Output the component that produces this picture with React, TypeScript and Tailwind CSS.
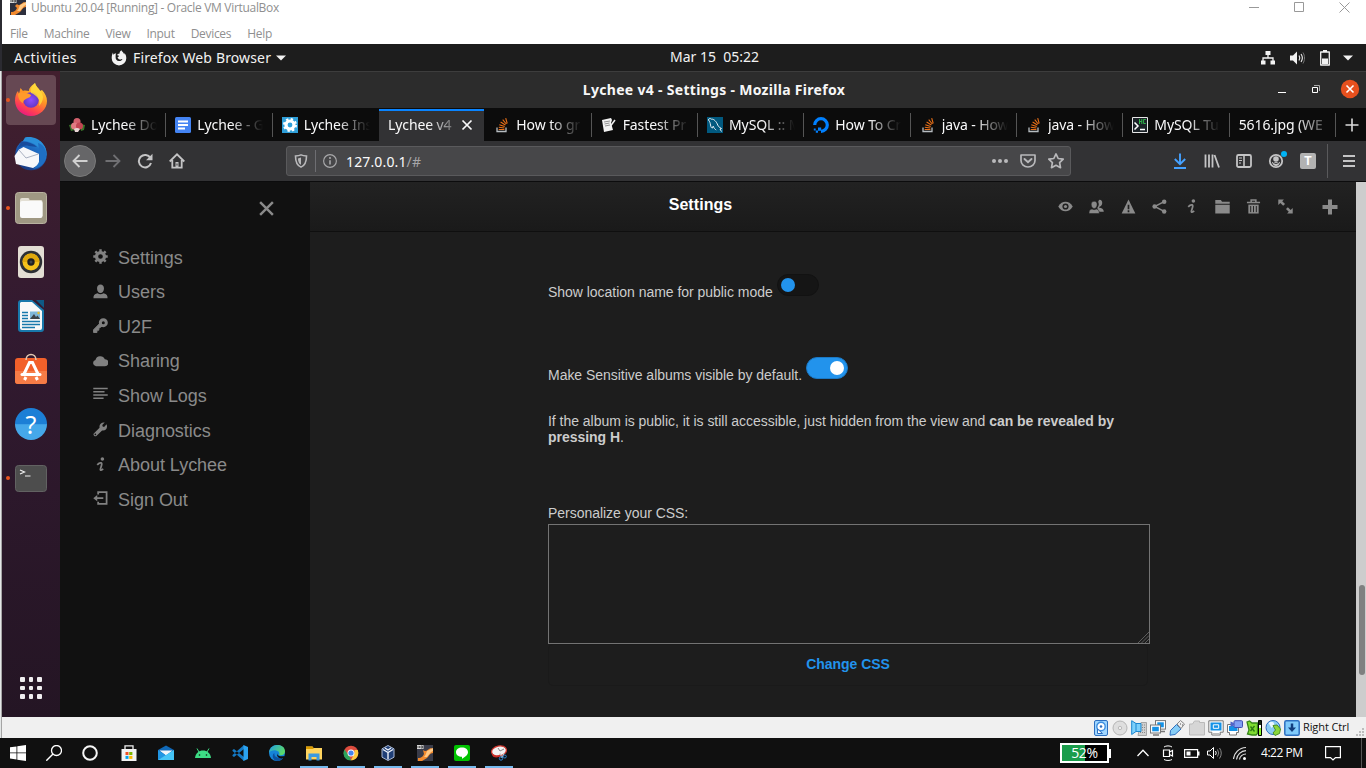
import type { ReactNode } from 'react';

type IconProps = { children: ReactNode; w?: number; h?: number; vb?: string; className?: string };

const Svg = ({ children, w = 16, h, vb, className = '' }: IconProps) => (
  <svg width={w} height={h ?? w} viewBox={vb ?? '0 0 16 16'} fill="none" className={`shrink-0 ${className}`}>
    {children}
  </svg>
);

/* ---------- VirtualBox window ---------- */

const VmLogo = () => (
  <Svg>
    <rect width="16" height="16" fill="#2d2f3d" />
    <path d="M7 5c2 3 5-1 7-2l2 1v4c-3 0-4 3-6 5l-5 3H1v-3c4 0 5-2 6-4L5 7z" fill="#f28a2e" />
    <path d="M10 6l6-3v3c-3 1-4 4-6 6H7c2-2 2-4 3-6z" fill="#ffc985" />
    <rect width="6.500" height="4" fill="#d8d8d8" />
    <path d="M1 1v2M2.500 1v2M4 1h1.500v2H4z" stroke="#444" strokeWidth=".8" />
  </Svg>
);

const VmTitle = () => (
  <header className="flex h-[44px] flex-col bg-white font-['Open_Sans','Noto_Sans',sans-serif] text-[12px] text-[#8f8f8f]">
    <div className="flex h-[24px] items-start justify-between pl-[8px]">
      <div className="-mt-[1px] flex items-start gap-[5px]">
        <VmLogo />
        <span className="leading-[17px] tracking-[-0.31px]">Ubuntu 20.04 [Running] - Oracle VM VirtualBox</span>
      </div>
      <div className="flex gap-[35px] pr-[16px] pt-[2px]">
        <Svg w={10} vb="0 0 10 10"><path d="M0 5.500h10" stroke="#999" /></Svg>
        <Svg w={10} vb="0 0 10 10"><path d="M.5.5h9v9h-9z" stroke="#999" /></Svg>
        <Svg w={11} vb="0 0 11 11"><path d="M.5.500l10 10M10.500.500l-10 10" stroke="#999" /></Svg>
      </div>
    </div>
    <nav className="flex h-[20px] items-center gap-[16px] pl-[8px]">
      {['File', 'Machine', 'View', 'Input', 'Devices', 'Help'].map((m) => (
        <span key={m} className="tracking-[-0.3px]">{m}</span>
      ))}
    </nav>
  </header>
);

/* ---------- GNOME top bar ---------- */

const TopBar = () => (
  <div className="grid h-[27px] grid-cols-[1fr_auto_1fr] items-center bg-[#1d1d1d] font-['Noto_Sans',sans-serif] text-[14px] text-[#f2f2f2]">
    <div className="flex items-center pl-[12px]">
      <span className="w-[97px] tracking-[0.46px]">Activities</span>
      <Svg className="mr-[6px]">
        <path d="M8 15.500a7.300 7.300 0 0 0 7.300-7.300c0-2.300-.8-4-2-5.100.1.700 0 1.100-.1 1.400C12.500 2.500 11 1.500 10.400.300 9 1.200 8.500 2.300 8.600 3.500c-1.400.1-2.200.7-2.400 1.500.3.500 1 .6 1.900.7-.2.800-1 1.100-1.500 1.400.2 2 1.500 2.700 2.800 2.400 1-.2 1.300-.7 2-.5-.5 1.500-1.900 2.200-3.400 2.100-2.200-.2-3.600-2-3.400-4.100.1-1-.1-2.700.6-3.700-1.300.2-2.300.8-2.900 1.400L2 2.500C1.200 4 .7 6 .7 8.200A7.300 7.300 0 0 0 8 15.500z" fill="#f2f2f2" />
      </Svg>
      <span className="tracking-[0.14px]">Firefox Web Browser</span>
      <Svg w={10} h={6} vb="0 0 10 6" className="ml-[5px]"><path d="M0 .5h10L5 5.500z" fill="#f2f2f2" /></Svg>
    </div>
    <span className="-mt-[2px] whitespace-pre pl-[61px]">Mar 15  05:22</span>
    <div className="flex items-center justify-end pr-[13px] text-white">
      <Svg><path d="M5.500 1h5v4h-5zM1 10.500h4.500v4H1zM10.500 10.500H15v4h-4.500z" fill="#f2f2f2" /><path d="M8 5v3M3 11V8h10v3" stroke="#f2f2f2" strokeWidth="1.300" /></Svg>
      <Svg className="ml-[13px]">
        <path d="M1 5.500h3l4-4v13l-4-4H1z" fill="#f2f2f2" />
        <path d="M10 5.500c1 1.500 1 3.500 0 5M12 4c1.700 2.500 1.700 5.500 0 8" stroke="#f2f2f2" strokeWidth="1.100" />
        <path d="M14 2.500c2 3.500 2 7.500 0 11" stroke="#777" />
      </Svg>
      <Svg className="ml-[12px]"><path d="M3.700 2h8.600v13H3.700z" stroke="#f2f2f2" strokeWidth="1.300" strokeLinejoin="round" /><path d="M6 0h4v2H6zM5 8.500h6V14H5z" fill="#f2f2f2" /></Svg>
      <Svg w={10} h={6} vb="0 0 10 6" className="ml-[10px]"><path d="M0 .5h10L5 5.500z" fill="#f2f2f2" /></Svg>
    </div>
  </div>
);

/* ---------- Dock ---------- */

const FirefoxLogo = () => (
  <Svg w={34} vb="0 0 34 34">
    <defs>
      <linearGradient id="ff" x1=".75" y1="0" x2=".25" y2="1"><stop stopColor="#ffe93f" /><stop offset=".4" stopColor="#ff9823" /><stop offset=".75" stopColor="#ff4052" /><stop offset="1" stopColor="#e31587" /></linearGradient>
      <radialGradient id="ffp"><stop stopColor="#8f4dff" /><stop offset="1" stopColor="#6438c5" /></radialGradient>
    </defs>
    <path d="M17 33C8 33 1 26 1 17.500 1 14 2 10 4 8l1 3 1.500-6L9 8c2-1 4 0 6 0 0-4 4-6 6-8 1 4 4 5 5 8l2-1c3 3 5 7 5 11 0 8-7 15-16 15z" fill="url(#ff)" />
    <circle cx="17" cy="17" r="7.800" fill="url(#ffp)" />
    <path d="M4 11c2-2 4-2 6-1 2 0 4 0 7 2 0 2-3 3-5 4-2 1-3 2-3 4-3-1-5-5-5-9z" fill="#ff9a2b" />
    <path d="M21 0c1 5 7 7 8 14 0 4-2 7-4 9 2-7-3-11-8-13-1-4 1-7 4-10z" fill="#ffd93b" opacity=".85" />
  </Svg>
);

const ThunderbirdLogo = () => (
  <Svg w={34} vb="0 0 34 34">
    <defs><linearGradient id="tb" x1="1" y1="0" x2=".4" y2="1"><stop stopColor="#2a9ce6" /><stop offset=".5" stopColor="#1c62bb" /><stop offset="1" stopColor="#183a84" /></linearGradient></defs>
    <circle cx="17" cy="17.500" r="15.800" fill="url(#tb)" />
    <path d="M9 4L11 .500C17-1 25 1 29 7c5 6 4 14 0 19C32 13 20 4 9 4z" fill="#2a8fda" />
    <path d="M7 5c5-1 12 1 16 5l-8-1C11 8 8 9 4 11z" fill="#174b9c" />
    <path d="M.5 19L5 12.500 9.500 10 25 17v10.500L19 31 2 27z" fill="#f6f7fa" />
    <path d="M5 13l7 8 12.500-4" stroke="#9fa8ba" strokeWidth=".9" />
    <path d="M25 13c2 8 1 14-6 19 10-1 14-9 13-17-1-5-4-8-8-9z" fill="#1f6fc4" />
  </Svg>
);

const FilesLogo = () => (
  <Svg w={32} vb="0 0 32 32">
    <rect x=".5" y=".5" width="31" height="31" rx="3" fill="#9f9883" stroke="#b8b2a0" />
    <path d="M5 8q0-2 2-2h6q1.500 0 1.500 2H26q1.500 0 1.500 2v14H5z" fill="#e3dfd4" />
    <rect x="5" y="9" width="22.500" height="17" rx="2" fill="#fafafa" />
  </Svg>
);

const MusicLogo = () => (
  <Svg w={26} h={32} vb="0 0 26 32">
    <rect width="26" height="32" rx="3" fill="#e3ded4" />
    <circle cx="13" cy="16" r="11.200" fill="#2c2f34" /><circle cx="13" cy="16" r="8.500" fill="#f4c21b" />
    <path d="M4.500 16a8.500 8.500 0 0 1 17 0z" fill="#e0a80c" /><circle cx="13" cy="16" r="3.700" fill="#1d1f22" /><circle cx="13" cy="16" r="1.500" fill="#3d454b" />
  </Svg>
);

const WriterLogo = () => (
  <Svg w={26} h={32} vb="0 0 26 32">
    <path d="M3 0h11l12 10v19q0 3-3 3H3q-3 0-3-3V3q0-3 3-3z" fill="#1878ab" />
    <path d="M18 0h8v8z" fill="#0e5a86" />
    <path d="M3 2h11l10 9v17q0 2-2 2H4q-2 0-2-2V3z" fill="#f8f8f8" />
    <path d="M4 12.500h6M4 15.500h6M4 18.500h6M4 21.500h18M4 24.500h18M4 27.500h13" stroke="#1878ab" strokeWidth="1.400" />
    <rect x="12" y="11.500" width="10" height="7.500" fill="#7fb7d8" /><path d="M12 19l4-5 2 3 1.500-1.500L22 19z" fill="#3d4347" /><circle cx="20.500" cy="13" r="1.200" fill="#e6bd2b" />
  </Svg>
);

const SoftwareLogo = () => (
  <Svg w={32} vb="0 0 32 32" className="-mt-[2px]">
    <rect y="5" width="32" height="26" rx="3" fill="#f2602a" /><path d="M0 18h32v10q0 3-3 3H3q-3 0-3-3z" fill="#f67c46" />
    <path d="M11 7c0-7.500 10-7.500 10 0" stroke="#e2c9b2" strokeWidth="1.500" />
    <path d="M9 21l5.500-11.500h3L23 21M11 24l-1.500 3M21 24l1.500 3" stroke="#fff" strokeWidth="3" />
    <path d="M7 21.500h18" stroke="#fff" strokeWidth="3" strokeLinecap="round" />
  </Svg>
);

const HelpLogo = () => (
  <div className="flex size-8 items-center justify-center rounded-full bg-linear-to-b from-[#1c7fd6] from-50% to-[#45a8ea] to-52% font-['Noto_Sans',sans-serif] text-[25px] leading-none text-white">?</div>
);

const TerminalLogo = () => (
  <Svg w={32} h={27} vb="0 0 32 27">
    <rect x=".5" y=".5" width="31" height="26" rx="3" fill="#4d4d4d" stroke="#626262" />
    <path d="M5 5l4.500 2L5 9M10 11h5.500" stroke="#f1f1f1" strokeWidth="1.200" />
  </Svg>
);

const dock: { icon: ReactNode; running?: boolean; active?: boolean }[] = [
  { icon: <FirefoxLogo />, running: true, active: true },
  { icon: <ThunderbirdLogo /> },
  { icon: <FilesLogo />, running: true },
  { icon: <MusicLogo /> },
  { icon: <WriterLogo /> },
  { icon: <SoftwareLogo /> },
  { icon: <HelpLogo /> },
  { icon: <TerminalLogo />, running: true },
];

const Dock = () => (
  <aside className="flex w-[58px] shrink-0 flex-col justify-between bg-linear-to-b from-[#421f2e] via-[#321a30] via-40% to-[#241524] pb-[18px] pt-[2px]">
    <div className="flex flex-col">
      {dock.map((d, i) => (
        <div key={i} className="flex h-[54px] items-center">
          <div className={`ml-[4px] flex h-[50px] w-[50px] items-center justify-center rounded-[4px] ${d.active ? 'bg-[#664853]' : ''}`}>
            <span className={`size-[4px] shrink-0 rounded-full ${d.running ? 'bg-[#e95420]' : ''}`} />
            <span className="flex w-[42px] justify-center">{d.icon}</span>
            <span className="w-[4px] shrink-0" />
          </div>
        </div>
      ))}
    </div>
    <div className="grid grid-cols-3 gap-[4px] self-center">
      {Array.from({ length: 9 }, (_, i) => <span key={i} className="size-[4.600px] rounded-[1px] bg-[#f0eef0]" />)}
    </div>
  </aside>
);

/* ---------- Firefox chrome ---------- */

const StackOverflow = () => (
  <Svg>
    <path d="M3 10.500v4h9v-4" stroke="#b6bcc0" strokeWidth="1.300" />
    <path d="M4.700 12.500h5.700M4.800 10.300l5.600.7M5.300 7.700l5.400 1.700M6.600 5l4.800 3M8.700 2.700l3.600 4.300M11.700 1.200l1.500 5.300" stroke="#ea7018" strokeWidth="1.100" />
  </Svg>
);

const Lychee = () => (
  <Svg>
    <path d="M0 8l5-1 1 6-4 1zM11 7l5 1-1 5-3 1z" fill="#39752b" />
    <circle cx="8" cy="4.500" r="3.500" fill="#d2606c" /><circle cx="5.500" cy="9" r="3.500" fill="#e07a82" /><circle cx="10.500" cy="9" r="3.500" fill="#c24653" />
    <path d="M5 12q3-2 6 0l-2 3H6z" fill="#ead5d5" />
  </Svg>
);

const GoogleDoc = () => (
  <Svg><rect width="16" height="16" rx="1.500" fill="#4484f3" /><path d="M3 4.500h10M3 8h10M3 11.500h7" stroke="#fff" strokeWidth="1.800" /></Svg>
);

const GearTile = () => (
  <Svg>
    <rect width="16" height="16" fill="#2f9fd9" />
    <circle cx="8" cy="8" r="5.500" stroke="#fff" strokeWidth="3" strokeDasharray="2.160 2.160" /><circle cx="8" cy="8" r="4" stroke="#fff" strokeWidth="3.200" />
  </Svg>
);

const Paper = () => (
  <Svg>
    <path d="M1 3l9-2 1 2-1 3 2 7-9 2z" fill="#f2f2f2" /><path d="M3 5l6-1M3.500 7l5-1M4 9l5-1" stroke="#777" strokeWidth=".8" /><path d="M9.500 9L14 3" stroke="#eee" strokeWidth="1.500" />
  </Svg>
);

const MySql = () => (
  <Svg>
    <rect width="16" height="16" fill="#01597f" />
    <path d="M1.500 3c0-1.500 1.500-2 3-.8 2.500-.4 5 2.500 6.300 6 .5 1.500 1.700 2 3.700 3.300l-1.500.5 1.500 2.500M1.500 3c1.500 2 1.700 3 2 5 .4 2.500 1.500 3.500 2 3l.7-1.800c.8 2 1.700 3 3 3.800" stroke="#e8f1f5" strokeWidth="1" />
  </Svg>
);

const DigitalOcean = () => (
  <Svg><path d="M8 14.300A6.300 6.300 0 1 0 1.700 8" stroke="#0080ff" strokeWidth="3.200" /><path d="M5 10.500h3.200v3.200H5zM2.800 13.500H5v2.300H2.800zM.8 11.600h1.900v1.900H.8z" fill="#0080ff" /></Svg>
);

const HcTile = () => (
  <Svg>
    <path d="M.5.5h15v15H.5z" fill="#1b2227" stroke="#e6e6e6" />
    <path d="M2.500 5.500L6 9l-3.500 3.500M8 12.500h5" stroke="#fff" strokeWidth="1.500" /><path d="M7.500 2v5M9.800 2v5M7.500 4.500h2.300M13.800 2.500h-2.200v4h2.200" stroke="#31b24b" />
  </Svg>
);

const tabs: { icon?: ReactNode; label: string; active?: boolean; noSep?: boolean }[] = [
  { icon: <Lychee />, label: 'Lychee Do' },
  { icon: <GoogleDoc />, label: 'Lychee - G' },
  { icon: <GearTile />, label: 'Lychee Ins', noSep: true },
  { label: 'Lychee v4', active: true },
  { icon: <StackOverflow />, label: 'How to gr' },
  { icon: <Paper />, label: 'Fastest Pr' },
  { icon: <MySql />, label: 'MySQL :: M' },
  { icon: <DigitalOcean />, label: 'How To Cr' },
  { icon: <StackOverflow />, label: 'java - How' },
  { icon: <StackOverflow />, label: 'java - How' },
  { icon: <HcTile />, label: 'MySQL Tu' },
  { label: '5616.jpg (WE' },
];

const fade = (t: { icon?: ReactNode; active?: boolean }) => {
  if (t.active) return 'w-[66px] [mask-image:linear-gradient(to_right,#000_60%,#0004)]';
  if (t.icon) return 'w-[66px] [mask-image:linear-gradient(to_right,#000_52%,#0007_75%,transparent)]';
  return 'w-[88px] [mask-image:linear-gradient(to_right,#000_65%,#0003)]';
};

const TabStrip = () => (
  <div className="flex h-[33px] bg-[#0c0c0c] font-['Noto_Sans',sans-serif] text-[14px] text-[#f9f9fa]">
    <div className="grid w-[1276px] shrink-0 grid-cols-12 pt-px">
      {tabs.map((t, i) => (
        <div key={i} className={`flex min-w-0 items-center pl-[9px] ${t.active ? 'mr-px border-t-2 border-[#0a84ff] bg-[#323234] pb-[2px]' : ''}`}>
          {t.icon && <span className="mr-[6px]">{t.icon}</span>}
          <span className={`mr-auto overflow-hidden whitespace-nowrap leading-[24px] tracking-[-0.1px] ${fade(t)}`}>{t.label}</span>
          {t.active && <Svg w={12} vb="0 0 12 12" className="mr-[11px]"><path d="M1.500 1.500l9 9M10.500 1.500l-9 9" stroke="#f9f9fa" strokeWidth="1.700" /></Svg>}
          {!t.active && !t.noSep && <span className="h-[24px] w-px bg-[#555]" />}
        </div>
      ))}
    </div>
    <div className="flex flex-1 items-center justify-center pl-[2px]"><Svg><path d="M8 1.500v13M1.500 8h13" stroke="#dadada" strokeWidth="1.600" /></Svg></div>
  </div>
);

const NavBar = () => (
  <div className="flex h-[41px] items-center border-b border-[#0c0c0d] bg-[#323234] text-[#c4c4c5]">
    <div className="ml-[4px] flex size-[32px] items-center justify-center rounded-full border border-[#7a7a7a] bg-[#666668]">
      <Svg><path d="M15.500 8H1.500M7.500 2L1.500 8l6 6" stroke="#d0d0d0" strokeWidth="1.900" /></Svg>
    </div>
    <Svg className="ml-[9px]"><path d="M.500 8h14M8.500 2l6 6-6 6" stroke="#707073" strokeWidth="1.800" /></Svg>
    <Svg className="ml-[16px]"><path d="M13.400 5A6.200 6.200 0 1 0 14 10" stroke="currentColor" strokeWidth="2" /><path d="M15.500.7v6.500H9z" fill="currentColor" /></Svg>
    <Svg className="ml-[16px]"><path d="M.7 8.500L8 1.300l7.300 7.200M3.300 7v7.700h9.400V7" stroke="currentColor" strokeWidth="1.800" /><path d="M6.500 9h3v6h-3z" fill="currentColor" /><path d="M8 10.500v2" stroke="#323234" /></Svg>
    <div className="ml-[101px] flex h-[30px] w-[785px] items-center rounded-[3px] border border-[#5a5a5c] bg-[#474749]">
      <Svg w={14} vb="0 0 16 16" className="ml-[7px]"><path d="M8 1c2 1 4 1.200 6.300 1.200 0 6-1 10.500-6.300 12.800C2.700 12.700 1.700 8.200 1.700 2.200 4 2.200 6 2 8 1z" stroke="#b9b9bb" strokeWidth="1.800" /><path d="M8 4c-1 .6-2 .9-3.500 1 .2 4 1.300 6 3.500 7.300z" fill="#b9b9bb" /></Svg>
      <span className="ml-[7px] h-[22px] w-px bg-[#6e6e72]" />
      <Svg w={14} vb="0 0 16 16" className="ml-[7px]"><circle cx="8" cy="8" r="7.300" stroke="#a9a9ab" strokeWidth="1.300" /><path d="M8 7v5" stroke="#b0b0b2" strokeWidth="1.700" /><circle cx="8" cy="4.500" r="1.100" fill="#b0b0b2" /></Svg>
      <span className="ml-[9px] font-['Noto_Sans',sans-serif] text-[14px] tracking-[0.14px] text-[#f9f9fa]">127.0.0.1<span className="text-[#a6a6a8]">/#</span></span>
      <div className="ml-auto flex items-center gap-[12px] pr-[6px]">
        <Svg><circle cx="2" cy="8" r="2" fill="#b9b9bb" /><circle cx="8" cy="8" r="2" fill="#b9b9bb" /><circle cx="14" cy="8" r="2" fill="#b9b9bb" /></Svg>
        <Svg><path d="M1 2h14v5.500a7 6.500 0 0 1-14 0z" stroke="#b9b9bb" strokeWidth="1.700" strokeLinejoin="round" /><path d="M4.500 6L8 9.300 11.500 6" stroke="#b9b9bb" strokeWidth="1.900" strokeLinecap="round" /></Svg>
        <Svg><path d="M8 .9l2.200 4.600 5 .7-3.600 3.500.9 5L8 12.300l-4.500 2.400.9-5L.8 6.200l5-.7z" stroke="#b9b9bb" strokeWidth="1.700" strokeLinejoin="round" /></Svg>
      </div>
    </div>
    <div className="ml-auto flex items-center gap-[16px]">
      <Svg><path d="M8 .500v10.500M2.800 6L8 11.200 13.200 6" stroke="#45a1ff" strokeWidth="1.900" /><path d="M2 15h12" stroke="#45a1ff" strokeWidth="2" /></Svg>
      <Svg><path d="M1.500 1.500v13M5 1.500v13M8.500 1.500v13M10.500 2l4.500 12.500" stroke="currentColor" strokeWidth="1.800" /></Svg>
      <Svg><rect x="1" y="2" width="14" height="12" rx="1.500" stroke="currentColor" strokeWidth="1.800" /><path d="M8 2v12" stroke="currentColor" strokeWidth="1.600" /><path d="M3 5h3M3 7.500h3M3 10h2" stroke="currentColor" /></Svg>
      <Svg w={20} h={18} vb="0 0 20 18" className="-mr-[4px] -mt-[2px]"><circle cx="8" cy="10" r="6.200" stroke="currentColor" strokeWidth="1.800" /><circle cx="8" cy="8" r="2.800" fill="currentColor" /><path d="M4 11h8q-1 4-4 4t-4-4z" fill="currentColor" /><path d="M5 11.500q3 2 6 0" stroke="#323234" /><circle cx="16" cy="3" r="3" fill="#00b3f4" /></Svg>
      <div className="flex size-[16px] items-center justify-center rounded-[2px] bg-[#b2b2b2] font-['Liberation_Sans',sans-serif] text-[12px] font-bold text-white">T</div>
    </div>
    <span className="ml-[11px] h-[34px] w-px bg-[#5a5a5c]" />
    <Svg w={12} h={14} vb="0 0 12 14" className="ml-[15px] mr-[11px]"><path d="M0 2h12M0 7h12M0 12h12" stroke="currentColor" strokeWidth="1.800" /></Svg>
  </div>
);

/* ---------- Lychee ---------- */

const cog = <><circle cx="8" cy="8" r="4.200" stroke="currentColor" strokeWidth="3.400" /><path d="M8 .3v3M8 12.700v3M.3 8h3M12.700 8h3M2.500 2.500l2.200 2.200M11.300 11.300l2.200 2.200M13.500 2.500l-2.200 2.200M4.700 11.300l-2.200 2.200" stroke="currentColor" strokeWidth="2.600" /></>;
const person = <path d="M8 .5c2.400 0 3.700 1.800 3.700 4.200 0 2.500-1.600 4.800-3.700 4.800S4.300 7.200 4.300 4.700C4.300 2.300 5.600.5 8 .5zM.5 15.300c-.2-3 .8-4.800 4.300-5.500q3.200 2 6.400 0c3.500.7 4.500 2.500 4.300 5.500z" fill="currentColor" />;
const info = <><circle cx="10" cy="2.200" r="1.900" fill="currentColor" /><path d="M4.500 8.300C6 6.700 7.500 6 8.600 6.300c1.300.5.700 2 .300 3.300l-1 3.300c-.3 1.500 1.200 1.200 3-.3" stroke="currentColor" strokeWidth="1.900" /></>;

const menu: { label: string; icon: ReactNode }[] = [
  { label: 'Settings', icon: cog },
  { label: 'Users', icon: person },
  { label: 'U2F', icon: <><circle cx="11" cy="5" r="3.200" stroke="currentColor" strokeWidth="3.200" /><path d="M7 6L.6 12.500v3h3.600V13h2v-2l3.800-2.500z" fill="currentColor" stroke="currentColor" strokeWidth="1" /></> },
  { label: 'Sharing', icon: <path d="M3.200 14a3.300 3.300 0 0 1-.6-6.500A5.300 5.300 0 0 1 12.600 6.600a3.700 3.700 0 0 1 .2 7.400z" fill="currentColor" /> },
  { label: 'Show Logs', icon: <path d="M.3 1.500h15.400M.3 5h12M.3 8.500h15.400M.3 12h11" stroke="currentColor" strokeWidth="1.600" /> },
  { label: 'Diagnostics', icon: <path d="M14.500 2.300l-2.700 2.900-1.500-.4-.4-1.600L12.500.6C9 0 6.300 2.500 7 6L.8 12.200c-1.200 1.500 1.200 4 2.800 2.800L9.700 9c3.300.8 6.500-2 4.800-6.700zM2.500 14a.9.900 0 1 1 0-1.800.9.900 0 0 1 0 1.800z" fill="currentColor" /> },
  { label: 'About Lychee', icon: info },
  { label: 'Sign Out', icon: <><path d="M5.500 3.700V1.300h9v12.500h-9v-2.300" stroke="currentColor" strokeWidth="1.900" /><path d="M3 7.600h8" stroke="currentColor" strokeWidth="1.900" /><path d="M.3 7.600l4.200-3.400V11z" fill="currentColor" /></> },
];

const Sidebar = () => (
  <aside className="flex w-[250px] shrink-0 flex-col bg-[#111111] font-['Liberation_Sans',sans-serif] text-[#8a8a8a]">
    <div className="flex h-[59px] justify-end pr-[35px] pt-[18px]">
      <Svg w={17}><path d="M2 2l12 12M14 2L2 14" stroke="#8a8a8a" strokeWidth="2.300" /></Svg>
    </div>
    <nav className="flex flex-col">
      {menu.map((m) => (
        <div key={m.label} className="flex h-[34.550px] items-center pl-[33px]">
          <Svg w={15} className="-mt-[3px] mr-[10px] text-[#818181]">{m.icon}</Svg>
          <span className="text-[18px] tracking-[-0.03px]">{m.label}</span>
        </div>
      ))}
    </nav>
  </aside>
);

const tools: ReactNode[] = [
  <><path d="M.3 8C2.500 4.300 5 3 8 3s5.500 1.300 7.700 5C13.500 11.700 11 13 8 13S2.500 11.700.3 8z" fill="currentColor" /><circle cx="8" cy="8" r="3.300" fill="#1f1f1f" /><circle cx="8" cy="8" r="1.700" fill="currentColor" /></>,
  <><path d="M11.300.7c2 .2 2.900 1.600 2.800 3.600 0 1.800-1.200 3.700-2.700 3.700l-.7 1.300c3 .2 5 1.200 5.100 4.200h-5l-2-4c2-2.300 2-4 1-6.500.3-1.200.7-2 1.500-2.300z" fill="currentColor" /><path d="M5.500 2.500c2.300 0 3.200 1.700 3.100 3.600 0 2-1.300 4-3.100 4s-3-2-3.100-4c-.1-2 .8-3.600 3.100-3.600zM0 15.500c0-3 .8-4.300 3.200-4.800q2.300 1.300 4.600 0c2.400.5 3.200 1.800 3.200 4.800z" fill="currentColor" stroke="#1f1f1f" strokeWidth=".5" /></>,
  <><path d="M8 .5L15.300 15.500H.7z" fill="currentColor" /><path d="M8 6v5M8 12v2" stroke="#1f1f1f" strokeWidth="1.800" /></>,
  <><circle cx="13" cy="2.800" r="2.400" fill="currentColor" /><circle cx="2.800" cy="8" r="2.400" fill="currentColor" /><circle cx="13" cy="13.200" r="2.400" fill="currentColor" /><path d="M13 2.800L2.800 8 13 13.200" stroke="currentColor" strokeWidth="1.500" /></>,
  info,
  <path d="M.3 1h6l1.200 2h8.200v2H.3zM.3 6h15.400v9.500H.3z" fill="currentColor" />,
  <><path d="M5.500 3V1h5v2M1 3.700h14" stroke="currentColor" strokeWidth="1.700" /><path d="M2.500 6h11v9.500h-11z" fill="currentColor" /><path d="M5 7.500V14M8 7.500V14M11 7.500V14" stroke="#1f1f1f" strokeWidth="1" /></>,
  <path d="M.3.500h6L4.500 2.300l3 3-2 2-3-3L.3 6.500zM15.700 15.500h-6l1.800-1.800-3-3 2-2 3 3 2.200-2.200z" fill="currentColor" />,
];

const Toggle = ({ on }: { on?: boolean }) => (
  <span className={`ml-[4px] flex h-[22px] w-[42px] items-center rounded-full border px-[3px] ${on ? 'justify-end border-[#1b79c5] bg-[#2293ec]' : 'border-[#121212] bg-[#151515]'}`}>
    <span className={`size-[14px] rounded-full ${on ? 'bg-white' : 'bg-[#2293ec]'}`} />
  </span>
);

const LycheePage = () => (
  <div className="flex min-w-0 flex-1 flex-col bg-[#1d1d1d] font-['Liberation_Sans',sans-serif]">
    <header className="flex h-[50px] shrink-0 border-b border-[#0f0f0f] bg-linear-to-b from-[#222222] to-[#1a1a1a]">
      <h1 className="ml-[240px] w-[301px] pt-[11px] text-center text-[16px] font-bold leading-[24px] tracking-[0.07px] text-white">Settings</h1>
      <div className="ml-auto flex items-center pr-[16px] text-[#8a8a8a]">
        {tools.map((t, i) => (
          <span key={i} className="flex w-[31.400px] justify-center"><Svg w={15}>{t}</Svg></span>
        ))}
        <Svg w={16} className="ml-[21px] mr-[2px]"><path d="M8 .5v15M.5 8h15" stroke="currentColor" strokeWidth="4" /></Svg>
      </div>
    </header>
    <main className="ml-[238px] w-[602px] text-[14px] leading-[16px] tracking-[-0.03px] text-[#cccccc]">
      <div className="mt-[42px] flex h-[26px] items-start"><p className="pt-[10px]">Show location name for public mode</p><Toggle /></div>
      <div className="mt-[57px] flex h-[26px] items-start"><p className="pt-[10px]">Make Sensitive albums visible by default.</p><Toggle on /></div>
      <p className="mt-[30px]">If the album is public, it is still accessible, just hidden from the view and <b>can be revealed by pressing H</b>.</p>
      <p className="mt-[60px]">Personalize your CSS:</p>
      <div className="mt-[3px] flex h-[120px] items-end justify-end border border-[#737373]">
        <Svg w={11} vb="0 0 11 11"><path d="M0 11L11 0M3.500 11L11 3.500M7 11l4-4" stroke="#5d5d5d" /></Svg>
      </div>
      <button className="h-[42px] w-[600px] rounded-[5px] border border-[#1a1a1a] pb-[3px] text-center font-bold tracking-[-0.03px] text-[#2293ec]">Change CSS</button>
    </main>
  </div>
);

const Firefox = () => (
  <section className="flex min-w-0 flex-1 flex-col">
    <div className="flex h-[37px] items-center border-t border-[#3d3d3d] bg-[#2c2c2c] font-['Noto_Sans',sans-serif]">
      <span className="w-[1308px] text-center text-[14px] font-bold leading-[20px] tracking-[0.3px] text-[#f7f7f7]">Lychee v4 - Settings - Mozilla Firefox</span>
      <div className="-ml-[90px] flex items-center">
        <Svg w={8} vb="0 0 8 8" className="mt-[6px]"><path d="M0 3.500h8" stroke="#fff" /></Svg>
        <Svg w={8} vb="0 0 8 8" className="-mt-[2px] ml-[26px]"><path d="M.5 2.500h5v5h-5z" stroke="#fff" /><path d="M2 .5h5.500V6" stroke="#aaa" /></Svg>
        <Svg w={20} vb="0 0 20 20" className="-mt-[2px] ml-[20px]"><circle cx="10" cy="10" r="9.200" fill="#e6501e" /><path d="M6.500 6.500l7 7M13.500 6.500l-7 7" stroke="#fff" strokeWidth="1.600" /></Svg>
      </div>
    </div>
    <TabStrip />
    <NavBar />
    <div className="flex min-h-0 flex-1">
      <Sidebar />
      <LycheePage />
      <div className="w-[10px] bg-[#cdcdcd] pl-[3px] pt-[403px]"><div className="h-[90px] w-[6px] rounded-full bg-[#7f8080]" /></div>
    </div>
  </section>
);

/* ---------- VirtualBox status bar ---------- */

const B = '#2d6fc0';
const status: ReactNode[] = [
  <><rect x="1.500" y=".5" width="13" height="15" rx="1.500" fill="#9fd6ff" stroke={B} /><circle cx="8" cy="6.500" r="4.200" fill="#fff" stroke="#3e8ee0" strokeWidth="1.400" /><circle cx="8" cy="6.500" r="1.300" fill={B} /><path d="M4.500 13.500L4.500 9l5 4.500z" fill="#fff" stroke={B} /></>,
  <><circle cx="8" cy="8" r="7" fill="#dedede" stroke="#b5b5b5" /><circle cx="8" cy="8" r="1.700" fill="#eee" stroke="#bbb" /></>,
  <><path d="M10 2.500h5.500v13H7z" fill="#d0d0d0" stroke="#a5a5a5" /><path d="M11 5h3M11 7.500h3M11 10h3M9 12.500h5" stroke="#888" strokeDasharray="1 1" /><path d="M.7.700L5 3.500h5v8H5L.7 14.500z" fill="#7cd0fb" stroke="#1b86cf" /><path d="M5 3.500v8" stroke="#1b86cf" /></>,
  <><rect x="5.500" y=".6" width="10" height="8.500" fill="#fff" stroke="#777" /><rect x="7.300" y="2.300" width="6.500" height="5" fill="#1592e6" /><path d="M11 11.500h4" stroke="#777" strokeWidth="1.500" /><rect x=".5" y="5" width="10" height="8" fill="#fff" stroke="#777" /><rect x="2.200" y="6.800" width="6.600" height="4.500" fill="#1592e6" /><path d="M3 15h6" stroke="#777" strokeWidth="1.500" /></>,
  <><path d="M1 15.200l.5-4.700L7.500 4.500 12 9l-6 5.500z" fill="#86cdf6" stroke={B} /><path d="M8 4l3.500-3.500L15.500 4 12 8.500z" fill="#eee" stroke="#888" /><path d="M11 4h1M13 5h1" stroke="#555" /></>,
  <path d="M.5 15V4h3l2-3h5v1.500h5V15z" fill="#d6d6d6" stroke="#bababa" />,
  <><path d="M.8.800h14.400v11.400h-3V15H3.800v-2.800h-3z" fill="#fff" stroke="#777" /><rect x="2.500" y="2.500" width="11" height="8" fill="#1592e6" /><path d="M5.300 4.800h5.400v3.500H5.300z" fill="#1592e6" stroke="#fff" /><path d="M4.500 13.500h7" stroke="#bbb" /></>,
  <><path d="M.5 4.500h11v8h-2V15h-7v-2.500h-2z" fill="#fff" stroke="#777" /><path d="M2 6h8.500v5H2z" fill="#1592e6" /><rect x="7" y=".7" width="8.500" height="6.800" rx="1" fill="#829ff3" stroke="#434fb4" /><path d="M3.500 1.500L7 3v2.500L3.500 7z" fill="#5264c7" /></>,
  <><path d="M1 2l2.500-1L6 3h5.500v10.500L10 15H6l-4.500-1L3 10z" fill="#7fdc31" stroke="#36851a" strokeWidth="1.300" /><path d="M4.500 11l4-5M4.500 6.500l4 5" stroke="#2c7a14" strokeWidth="1.400" /><path d="M12.500.5h3v15h-3z" fill="#192611" stroke="#000" /><path d="M14 5v3" stroke="#fff" strokeWidth="2" /><path d="M14 8v7" stroke="#8cf72c" strokeWidth="2" /></>,
  <><circle cx="8" cy="7.500" r="7" fill="#8accf4" stroke={B} /><path d="M3.500 3C7 .500 10 2.500 9 5.500L6.500 8z" fill="#eaf7ff" /><path d="M8 5.500l4-.5 3.500 4-1 4.500-4.500 2-2-2.500L10.500 10z" fill="#8bd73b" stroke="#4a8e25" /></>,
  <><rect x=".8" y=".8" width="14.400" height="14.400" rx="1.500" fill="#7fcafb" stroke={B} strokeWidth="1.500" /><path d="M8 3.500v5" stroke="#123d7d" strokeWidth="2.500" /><path d="M4 7.500h8l-4 4.500z" fill="#123d7d" /></>,
];

const StatusBar = () => (
  <div className="flex h-[21px] items-center justify-end bg-[#f0f0f0] font-['Open_Sans','Noto_Sans',sans-serif] text-[11px] text-[#111]">
    <div className="flex items-center gap-[3.100px]">{status.map((s, i) => <Svg key={i}>{s}</Svg>)}</div>
    <span className="ml-[3px] w-[47px] whitespace-nowrap tracking-[-0.1px]">Right Ctrl</span>
    <Svg w={9} vb="0 0 9 9" className="ml-[6px] mr-px mt-[9px]"><path d="M6 0h2v2H6zM3 3h2v2H3zM6 3h2v2H6zM0 6h2v2H0zM3 6h2v2H3zM6 6h2v2H6z" fill="#bdbdbd" /></Svg>
  </div>
);

/* ---------- Windows taskbar ---------- */

const pinned: ReactNode[] = [
  <path d="M0 2.300L6.500 1.400v6.100H0zM7.300 1.300L16 0v7.500H7.300zM0 8.300h6.500v6.100L0 13.500zM7.300 8.300H16V16l-8.700-1.300z" fill="#fff" />,
  <><circle cx="10.500" cy="5.500" r="5" stroke="#fff" strokeWidth="1.300" /><path d="M7 9L.3 15.700" stroke="#fff" strokeWidth="1.400" /></>,
  <circle cx="8" cy="8" r="6.800" stroke="#f5f5f5" strokeWidth="2" />,
];

const apps: { icon: ReactNode; open?: boolean }[] = [
  { icon: <><path d="M4 5V.800h8V5" stroke="#eee" strokeWidth="1.300" /><path d="M.5 4h15v12H.5z" fill="#f2f2f2" /><path d="M4.500 7H7.500v3H4.500z" fill="#f05023" /><path d="M8.200 7h3.200v3H8.200z" fill="#7db700" /><path d="M4.500 10.900h3v3h-3z" fill="#00a2ed" /><path d="M8.200 10.900h3.200v3H8.200z" fill="#fcb900" /></> },
  { icon: <><path d="M0 5l8-4.500L16 5v10H0z" fill="#1069b8" /><path d="M1.500 5.500h13L8 10.500z" fill="#f0f6fb" /><path d="M0 5l8 5.500L0 15z" fill="#2196e3" /><path d="M0 15L16 5v10z" fill="#45c5f7" /></> },
  { icon: <><path d="M0 13c.5-5 4-7.500 8-7.500s7.500 2.500 8 7.500z" fill="#3ddc84" /><path d="M4 7L2 3.500M12 7l2-3.500" stroke="#3ddc84" /><circle cx="4.500" cy="10" r=".8" fill="#111" /><circle cx="11.500" cy="10" r=".8" fill="#111" /></> },
  { icon: <><path d="M.5 5L2 4l10 8v4L.5 6zM.5 11L2 12l10-8V0L.5 10z" fill="#1479c4" /><path d="M11.500 0L16 2v12l-4.500 2z" fill="#2ba3f0" /></> },
  { icon: <><defs><linearGradient id="edge" x1="0" y1="0" x2="1" y2=".5"><stop stopColor="#1f9fe6" /><stop offset="1" stopColor="#5bd969" /></linearGradient></defs><circle cx="8" cy="8" r="8" fill="#1584d8" /><path d="M0 8C.500-2.500 16-2.500 16 6.500c0 3-3 4.500-6 3.500 1-2 0-4-3-4.500C4 5 1 6 0 8z" fill="url(#edge)" /><path d="M5.500 8c-1 3 2 6 9 4.500-2 3-5 4-8 3C3 13.500 3 9.500 5.500 8z" fill="#0d519f" /><path d="M9 7.500c-1.500 2 0 4.500 6.500 3.500l-.5 2c-4 1.500-9-1.500-6-5.500z" fill="#111" /></> },
  { open: true, icon: <><path d="M0 1.500h6.500l1 1.500H16v11.500H0z" fill="#ffd45e" /><path d="M0 1.500h6.500L7.500 3v1H0z" fill="#d99a00" /><path d="M2.500 8.500h11v7h-3v-3.500h-5v3.500h-3z" fill="#3d9adf" /></> },
  { open: true, icon: <><circle cx="8" cy="8" r="7.300" fill="#dd4c3e" /><path d="M1.500 4.500l5.500 8 1 3C1.500 15.500-1 9 1.500 4.500z" fill="#2ca55b" /><path d="M8 15.300L11.500 8V5h3.200c2 5-1.500 10.300-6.700 10.300z" fill="#fdcb3d" /><circle cx="8" cy="8" r="3.500" fill="#fff" /><circle cx="8" cy="8" r="2.600" fill="#4584ee" /></> },
  { open: true, icon: <><path d="M8 .5l6 3.300v8.400l-6 3.300-6-3.300V3.800z" fill="#203f76" stroke="#a9b9d6" /><path d="M3 4.500l5 3 5-3M8 7.500v7M5 3l3 2 3-2" stroke="#eef3fb" strokeWidth="1.400" /></> },
  { open: true, icon: <g><rect width="16" height="16" fill="#3a3c49" /><path d="M6 5c3 3 5-1 8-2l2 1v4c-3 0-4 3-6 5l-5 3H1v-3c4 0 5-2 6-4z" fill="#f28a2e" /><path d="M10 6l6-3v3c-3 1-4 4-6 6H7c2-2 2-4 3-6z" fill="#ffc985" /><rect width="6.500" height="4" fill="#d8d8d8" /><path d="M1 1v2M2.500 1v2M4 1h1.500v2H4z" stroke="#444" strokeWidth=".8" /></g> },
  { open: true, icon: <><rect width="16" height="16" rx="2" fill="#00c300" /><path d="M8 2.500c3.500 0 6 2 6 4.700 0 3-3.500 5-6 6.500v-1.900c-3.500 0-6-1.900-6-4.600S4.500 2.500 8 2.500z" fill="#fff" /></> },
  { open: true, icon: <><ellipse cx="8" cy="6" rx="7.500" ry="5" fill="#f3f3f3" stroke="#d0372f" strokeWidth="1.300" transform="rotate(-12 8 6)" /><path d="M7 3l2 3 4-2" stroke="#888" /><path d="M2 10c1 2 5 2 8 0" stroke="#c92d27" strokeWidth="2" /><path d="M9 8l2 5M13 8l-2 5" stroke="#ccc" /><circle cx="10" cy="13.500" r="1.700" stroke="#2c84cf" /><circle cx="13.800" cy="11.500" r="1.500" stroke="#2c84cf" /></> },
];

const Taskbar = () => (
  <footer className="flex h-[30px] bg-[#101010] font-['Open_Sans','Noto_Sans',sans-serif] text-white">
    {pinned.map((p, i) => <span key={i} className="flex w-[36px] items-center justify-center"><Svg>{p}</Svg></span>)}
    <div className="ml-[2px] flex">
      {apps.map((a, i) => (
        <span key={i} className="flex w-[37px] flex-col items-center">
          <Svg className="mt-[7px]">{a.icon}</Svg>
          {a.open && <span className="mt-auto h-[2px] w-[28px] bg-[#76b9ed]" />}
        </span>
      ))}
    </div>
    <div className="ml-auto flex items-center">
      <div className="flex h-[20px] w-[49px] items-center justify-center border-2 border-white bg-linear-to-r from-[#1a9c4b] from-50% to-black to-50% text-[14px] leading-none tracking-[-0.3px]">52%</div>
      <span className="h-[9px] w-[2px] bg-white" />
      <Svg w={12} h={8} vb="0 0 12 8" className="ml-[26px]"><path d="M.5 7L6 1.300 11.500 7" stroke="#fff" strokeWidth="1.300" /></Svg>
      <Svg className="ml-[11px]"><path d="M3.500 5h6v6.500h-6zM9.500 7l3-1.500v5.500l-3-1.500" stroke="#fff" strokeWidth="1.200" /><path d="M4 2c2-1.500 6-1.500 8 0M4 14.500c2 1.300 6 1.300 8 0" stroke="#fff" /></Svg>
      <Svg className="ml-[8px]"><path d="M.6 4.600h13v7.800H.6z" stroke="#fff" strokeWidth="1.200" /><path d="M2.500 6.500h4v4h-4zM14 6.500h1.500v4H14z" fill="#fff" /></Svg>
      <Svg className="ml-[7px]"><path d="M.5 6h2.500l3.500-3.500v11L3 10H.5z" stroke="#fff" /><path d="M8.500 6q1.500 2 0 4" stroke="#fff" /><path d="M10.500 4.500q2.500 3.500 0 7M12.500 3q3.500 5 0 10.500" stroke="#888" /></Svg>
      <Svg className="ml-[10px]"><circle cx="11.500" cy="13.500" r="1.500" fill="#fff" /><path d="M.500 14C1 8 6 2.800 13 2.500M3.500 14.500C4 9.500 8 6 13 5.700M6.500 14.500c.3-3 3-5.500 6.500-5.500" stroke="#ddd" strokeWidth="1.200" /></Svg>
      <span className="ml-[12px] w-[42px] whitespace-nowrap text-[12px] tracking-[-0.45px]">4:22 PM</span>
      <Svg className="ml-[22px]"><path d="M.6 1.600h14.800v11H10.500L8 15l-2.500-2.400H.6z" stroke="#fff" strokeWidth="1.200" /></Svg>
      <span className="ml-[20px] mr-[4px] h-[30px] w-px bg-[#555]" />
    </div>
  </footer>
);

export default function App() {
  return (
    <div className="flex h-[768px] w-[1366px] flex-col overflow-hidden bg-[#101010]">
      <div className="flex min-h-0 flex-1">
        <div className="flex w-[2px] shrink-0 flex-col">
          <span className="h-[71px] bg-[#2b2b31]" />
          <span className="flex-1 border-r border-[#a5a5a5] bg-[#e4e7e7]" />
        </div>
        <div className="flex min-w-0 flex-1 flex-col">
          <VmTitle />
          <TopBar />
          <div className="flex min-h-0 flex-1">
            <Dock />
            <Firefox />
          </div>
          <StatusBar />
        </div>
      </div>
      <Taskbar />
    </div>
  );
}
